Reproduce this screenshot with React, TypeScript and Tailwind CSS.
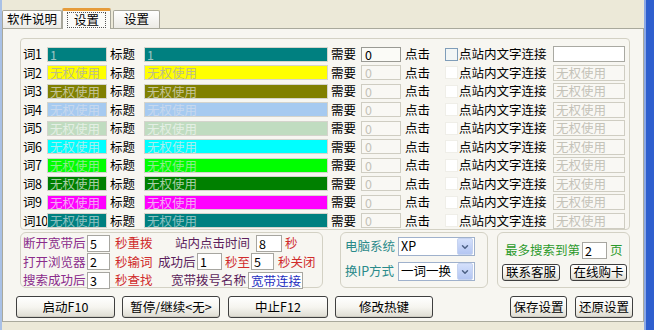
import React from 'react';
import { ChevronDown } from 'lucide-react';

type WordRow = { label: string; bg: string; fg: string; text: string; enabled: boolean };

const ROWS: WordRow[] = [
    { label: '词1', bg: 'bg-[#008080]', fg: 'text-[#9cc4c4]', text: '1', enabled: true },
    { label: '词2', bg: 'bg-[#ffff00]', fg: 'text-[#bdbd88]', text: '无权使用', enabled: false },
    { label: '词3', bg: 'bg-[#808000]', fg: 'text-[#c4c498]', text: '无权使用', enabled: false },
    { label: '词4', bg: 'bg-[#a6caf0]', fg: 'text-[#c6d8ee]', text: '无权使用', enabled: false },
    { label: '词5', bg: 'bg-[#c0dcc0]', fg: 'text-[#e4efe4]', text: '无权使用', enabled: false },
    { label: '词6', bg: 'bg-[#00ffff]', fg: 'text-[#a8eeee]', text: '无权使用', enabled: false },
    { label: '词7', bg: 'bg-[#00ff00]', fg: 'text-[#8cee8c]', text: '无权使用', enabled: false },
    { label: '词8', bg: 'bg-[#008000]', fg: 'text-[#a8cfa8]', text: '无权使用', enabled: false },
    { label: '词9', bg: 'bg-[#ff00ff]', fg: 'text-[#f4a8f4]', text: '无权使用', enabled: false },
    { label: '词10', bg: 'bg-[#008080]', fg: 'text-[#8cc0c0]', text: '无权使用', enabled: false },
];

const XpButton: React.FC<{ label: string; w: string; h?: string }> = ({ label, w, h = 'h-[22px]' }) => (
    <button className={`${w} ${h} flex items-center justify-center rounded-[3px] border border-[#3f3f3f] bg-gradient-to-b from-white via-[#f6f5f0] to-[#dedcd2] text-[12.5px] text-black shadow-[inset_0_-1px_0_#cfcdc3]`}>
        {label}
    </button>
);

const SmallInput: React.FC<{ value: string; w: string; color?: string }> = ({ value, w, color = 'text-black' }) => (
    <div className={`${w} h-[17px] border border-[#a7a6a0] bg-white pl-[2px] leading-[15px] text-[12.5px] ${color}`}>
        {value}
    </div>
);

const XpSelect: React.FC<{ value: string }> = ({ value }) => (
    <div className="w-[77px] h-[19px] border border-[#9fb1cc] bg-white flex items-center">
        <span className="flex-1 pl-[2px] text-[12.5px] leading-none">{value}</span>
        <div className="w-[16px] h-[17px] mr-px bg-gradient-to-b from-[#d4e0fb] to-[#b4c6f2] border border-[#c6d3f0] rounded-[2px] flex items-center justify-center">
            <ChevronDown className="w-[10px] h-[10px] text-[#4d6185]" strokeWidth={3.5} />
        </div>
    </div>
);

export default function App() {
    return (
        <div className="w-[654px] h-[330px] bg-[#ece9d8] flex overflow-hidden whitespace-nowrap text-black font-['Noto_Sans_CJK_SC','Liberation_Sans',sans-serif]">
            <div className="w-[2px] bg-[#a9c1e6]" />

            <div className="flex-1 flex flex-col pt-[7px]">
                {/* tabs */}
                <div className="h-[21px] flex items-end text-[12.5px]">
                    <div className="w-[60px] h-[18px] border border-b-0 border-[#a7a69a] bg-gradient-to-b from-white to-[#ecebe5] flex items-center justify-center rounded-t-[2px]">
                        软件说明
                    </div>
                    <div className="w-[49px] h-[21px] border-x border-[#a7a69a] border-t-[3px] border-t-[#e69b3a] bg-[#fbfbf8] flex items-center justify-center -mb-px relative z-10 rounded-t-[2px]">
                        <span className="border border-dotted border-[#555] px-[6px] leading-[14px]">设置</span>
                    </div>
                    <div className="w-[47px] h-[18px] ml-[2px] border border-b-0 border-[#a7a69a] bg-gradient-to-b from-white to-[#ecebe5] flex items-center justify-center rounded-t-[2px]">
                        设置
                    </div>
                </div>

                {/* panel */}
                <div className="flex-1 mb-[8px] border border-[#a9a99c] bg-[#f7f6f1] pl-[17px] pt-[9px] text-[12.5px]">
                    <div className="w-[610px] h-[192px] border border-[#d3d1c4] rounded-[4px] pt-[6px] pl-px">
                        {ROWS.map((r) => (
                            <div key={r.label} className="h-[18.5px] flex items-center">
                                <span className="w-[25px] pl-px leading-none tracking-[-0.6px]">{r.label}</span>
                                <div className={`w-[60px] h-[15px] ${r.bg} ${r.fg} border border-[#d4d4cc] pl-[2px] leading-[13px]`}>{r.text}</div>
                                <span className="ml-[3px] w-[34px] leading-none">标题</span>
                                <div className={`w-[184px] h-[15px] ${r.bg} ${r.fg} border border-[#d4d4cc] pl-[2px] leading-[13px]`}>{r.text}</div>
                                <span className="ml-[3px] w-[30px] leading-none">需要</span>
                                <div className={`w-[40px] h-[15px] border pl-[3px] leading-[13px] ${r.enabled ? 'border-[#9a9a94] bg-[#fbfbf7] text-black' : 'border-[#cfcdc2] bg-[#f9f8f4] text-[#c4c2b8]'}`}>0</div>
                                <span className="ml-[4px] w-[40px] leading-none">点击</span>
                                <div className={`w-[13px] h-[13px] border ${r.enabled ? 'border-[#7f9db9] bg-[#f2f6f6]' : 'border-[#efeee8] bg-white'}`} />
                                <span className="ml-px w-[94px] leading-none">点站内文字连接</span>
                                <div className={`w-[72px] h-[16px] border pl-[2px] leading-[14px] ${r.enabled ? 'border-[#a9a9a2] bg-white' : 'border-[#cfcdc2] bg-[#f9f8f4] text-[#c4c2b8]'}`}>
                                    {r.enabled ? '' : '无权使用'}
                                </div>
                            </div>
                        ))}
                    </div>

                    {/* settings groups */}
                    <div className="flex mt-[2px]">
                        <div className="w-[303px] h-[56px] border border-[#d3d1c4] rounded-[6px] pl-[2px] pt-px">
                            <div className="h-[18.5px] flex items-center">
                                <span className="w-[64px] text-[#8b2c8b] leading-none">断开宽带后</span>
                                <SmallInput value="5" w="w-[23px]" />
                                <span className="ml-[5px] w-[60px] text-[#d02c2c] leading-none">秒重拨</span>
                                <span className="w-[81px] text-[#5c1f5c] leading-none">站内点击时间</span>
                                <SmallInput value="8" w="w-[26px]" />
                                <span className="ml-[3px] text-[#d02c2c] leading-none">秒</span>
                            </div>
                            <div className="h-[18.5px] flex items-center">
                                <span className="w-[64px] text-[#8b2c8b] leading-none">打开浏览器</span>
                                <SmallInput value="2" w="w-[23px]" />
                                <span className="ml-[5px] w-[43px] text-[#d02c2c] leading-none">秒输词</span>
                                <span className="w-[39px] text-[#5c1f5c] leading-none">成功后</span>
                                <SmallInput value="1" w="w-[25px]" />
                                <span className="ml-[3px] w-[26px] text-[#d02c2c] leading-none">秒至</span>
                                <SmallInput value="5" w="w-[23px]" />
                                <span className="ml-[4px] text-[#d02c2c] leading-none">秒关闭</span>
                            </div>
                            <div className="h-[18.5px] flex items-center">
                                <span className="w-[64px] text-[#8b2c8b] leading-none">搜索成功后</span>
                                <SmallInput value="3" w="w-[23px]" />
                                <span className="ml-[5px] w-[56px] text-[#d02c2c] leading-none">秒查找</span>
                                <span className="w-[77px] text-[#5c1f5c] leading-none">宽带拨号名称</span>
                                <SmallInput value="宽带连接" w="w-[55px]" color="text-[#1f2fc0]" />
                            </div>
                        </div>

                        <div className="ml-[17px] w-[148px] h-[56px] border border-[#d3d1c4] rounded-[6px] pl-[4px] pt-[4px] flex flex-col gap-[6px]">
                            <div className="flex items-center">
                                <span className="w-[53px] text-[#2a8a8a] leading-none">电脑系统</span>
                                <XpSelect value="XP" />
                            </div>
                            <div className="flex items-center">
                                <span className="w-[53px] text-[#2a8a8a] leading-none">换IP方式</span>
                                <XpSelect value="一词一换" />
                            </div>
                        </div>

                        <div className="ml-[9px] w-[133px] h-[56px] border border-[#d3d1c4] rounded-[6px] pt-[9px]">
                            <div className="flex items-center pl-[7px]">
                                <span className="w-[77px] text-[#2c9a2c] leading-none">最多搜索到第</span>
                                <SmallInput value="2" w="w-[25px]" />
                                <span className="ml-[3px] text-[#2c9a2c] leading-none">页</span>
                            </div>
                            <div className="flex items-center gap-[10px] pl-[4px] mt-[5px]">
                                <XpButton label="联系客服" w="w-[58px]" h="h-[17px]" />
                                <XpButton label="在线购卡" w="w-[57px]" h="h-[17px]" />
                            </div>
                        </div>
                    </div>

                    {/* action buttons */}
                    <div className="flex items-center -ml-[4px] mt-[8px]">
                        <XpButton label="启动F10" w="w-[99px]" />
                        <div className="ml-[7px]"><XpButton label="暂停/继续<无>" w="w-[98px]" /></div>
                        <div className="ml-[8px]"><XpButton label="中止F12" w="w-[100px]" /></div>
                        <div className="ml-[7px]"><XpButton label="修改热键" w="w-[98px]" /></div>
                        <div className="ml-[77px]"><XpButton label="保存设置" w="w-[57px]" /></div>
                        <div className="ml-[8px]"><XpButton label="还原设置" w="w-[58px]" /></div>
                    </div>
                </div>
            </div>

            <div className="w-[10px] bg-[#2e5fce] border-l-2 border-[#8aa8e6]" />
        </div>
    );
}
